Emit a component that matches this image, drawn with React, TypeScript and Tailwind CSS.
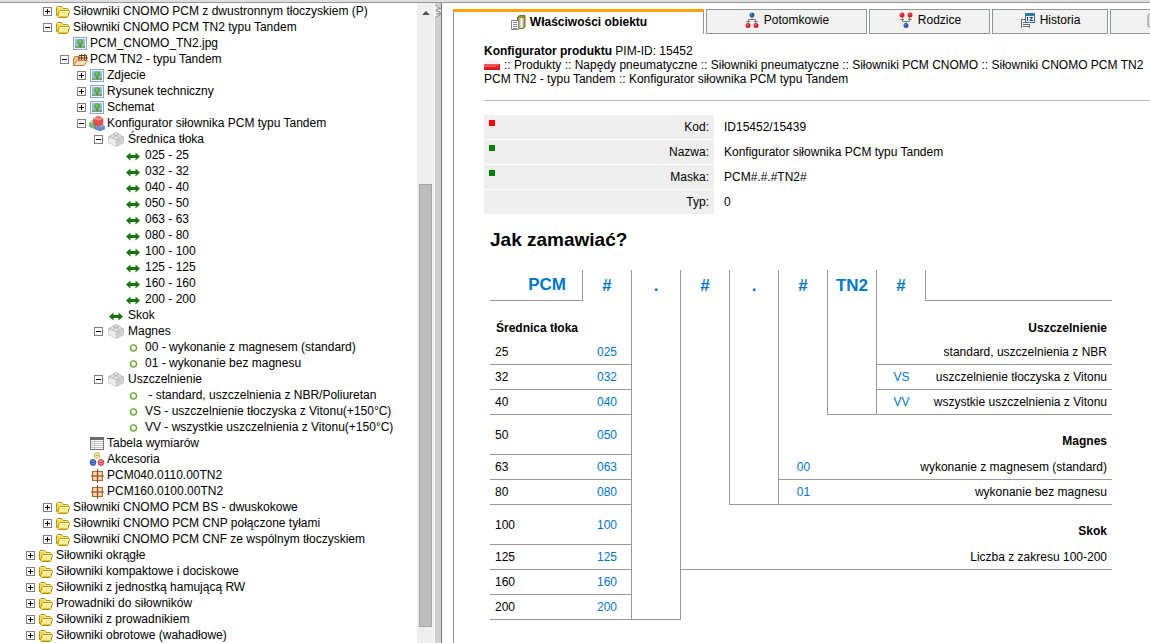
import { useState } from "react";
import type { ReactNode } from "react";

type IconName =
  | "folder"
  | "openFolder"
  | "image"
  | "cubes"
  | "brick"
  | "arrows"
  | "dot"
  | "table"
  | "circles"
  | "grid";

type Node = {
  label: string;
  icon: IconName;
  level: number;
  state?: "plus" | "minus";
};

const nodes: Node[] = [
  { level: 1, state: "plus", icon: "folder", label: "Siłowniki CNOMO PCM z dwustronnym tłoczyskiem (P)" },
  { level: 1, state: "minus", icon: "folder", label: "Siłowniki CNOMO PCM TN2 typu Tandem" },
  { level: 2, icon: "image", label: "PCM_CNOMO_TN2.jpg" },
  { level: 2, state: "minus", icon: "openFolder", label: "PCM TN2 - typu Tandem" },
  { level: 3, state: "plus", icon: "image", label: "Zdjecie" },
  { level: 3, state: "plus", icon: "image", label: "Rysunek techniczny" },
  { level: 3, state: "plus", icon: "image", label: "Schemat" },
  { level: 3, state: "minus", icon: "cubes", label: "Konfigurator siłownika PCM typu Tandem" },
  { level: 4, state: "minus", icon: "brick", label: "Średnica tłoka" },
  { level: 5, icon: "arrows", label: "025 - 25" },
  { level: 5, icon: "arrows", label: "032 - 32" },
  { level: 5, icon: "arrows", label: "040 - 40" },
  { level: 5, icon: "arrows", label: "050 - 50" },
  { level: 5, icon: "arrows", label: "063 - 63" },
  { level: 5, icon: "arrows", label: "080 - 80" },
  { level: 5, icon: "arrows", label: "100 - 100" },
  { level: 5, icon: "arrows", label: "125 - 125" },
  { level: 5, icon: "arrows", label: "160 - 160" },
  { level: 5, icon: "arrows", label: "200 - 200" },
  { level: 4, icon: "arrows", label: "Skok" },
  { level: 4, state: "minus", icon: "brick", label: "Magnes" },
  { level: 5, icon: "dot", label: "00 - wykonanie z magnesem (standard)" },
  { level: 5, icon: "dot", label: "01 - wykonanie bez magnesu" },
  { level: 4, state: "minus", icon: "brick", label: "Uszczelnienie" },
  { level: 5, icon: "dot", label: " - standard, uszczelnienia z NBR/Poliuretan" },
  { level: 5, icon: "dot", label: "VS - uszczelnienie tłoczyska z Vitonu(+150°C)" },
  { level: 5, icon: "dot", label: "VV - wszystkie uszczelnienia z Vitonu(+150°C)" },
  { level: 3, icon: "table", label: "Tabela wymiarów" },
  { level: 3, icon: "circles", label: "Akcesoria" },
  { level: 3, icon: "grid", label: "PCM040.0110.00TN2" },
  { level: 3, icon: "grid", label: "PCM160.0100.00TN2" },
  { level: 1, state: "plus", icon: "folder", label: "Siłowniki CNOMO PCM BS - dwuskokowe" },
  { level: 1, state: "plus", icon: "folder", label: "Siłowniki CNOMO PCM CNP połączone tyłami" },
  { level: 1, state: "plus", icon: "folder", label: "Siłowniki CNOMO PCM CNF ze wspólnym tłoczyskiem" },
  { level: 0, state: "plus", icon: "folder", label: "Siłowniki okrągłe" },
  { level: 0, state: "plus", icon: "folder", label: "Siłowniki kompaktowe i dociskowe" },
  { level: 0, state: "plus", icon: "folder", label: "Siłowniki z jednostką hamującą RW" },
  { level: 0, state: "plus", icon: "folder", label: "Prowadniki do siłowników" },
  { level: 0, state: "plus", icon: "folder", label: "Siłowniki z prowadnikiem" },
  { level: 0, state: "plus", icon: "folder", label: "Siłowniki obrotowe (wahadłowe)" },
];

const indents = ["pl-[23px]", "pl-[40px]", "pl-[57px]", "pl-[74px]", "pl-[91px]", "pl-[108px]"];

const drawings: Record<IconName, ReactNode> = {
  folder: (
    <>
      <path d="M1.500 12.500V4.500l1-1h4l1.500 2h4.500l1 1v6z" fill="#f3d94f" stroke="#b8940f" />
      <path d="M2.500 4.500h3.500l1.500 2h5" stroke="#fff6b8" fill="none" />
      <path d="M3.500 14.500l-1-1 1.500-5 1-1h9l.5.500-1.500 5.500-1 1z" fill="#fbec93" stroke="#b8940f" />
      <path d="M5 8.500h8.500" stroke="#fffde0" />
      <path d="M4 13.500h8.500" stroke="#e2c23c" />
    </>
  ),
  openFolder: (
    <>
      <path d="M1.500 13.500V8l1.500-2.500h3l1 1.500h6v6.500z" fill="#f3c68c" stroke="#c17a36" />
      <path d="M7 4.500h7.500v5H7z" fill="#f4d9b8" stroke="#6b3a1c" />
      <path d="M6 7h10M9.500 3v7M12.500 3v7" stroke="#6b3a1c" />
      <path d="M1.500 14.500l3.500-5h10.500l-3.500 5z" fill="#fce3c1" stroke="#c87a34" />
    </>
  ),
  image: (
    <>
      <rect x="1.500" y="2.500" width="13" height="12" fill="#f0f6fd" stroke="#8ba6cc" />
      <rect x="3" y="4" width="10" height="9" fill="#8ebcf0" />
      <rect x="3" y="11" width="10" height="2" fill="#7aa860" />
      <path d="M7.500 9h1.500v3H7.500z" fill="#6a6a2b" />
      <circle cx="8.300" cy="7.300" r="3" fill="#5fa83e" />
      <circle cx="8" cy="6.500" r="1.500" fill="#7cc355" />
    </>
  ),
  cubes: (
    <>
      <path d="M.5 7.500l2.500-2 5 1v5.500L4.500 13.500l-4-2z" fill="#7dba7a" stroke="#5d9e60" strokeWidth=".6" />
      <path d="M.5 7.500l2.500-2 5 1-3 2z" fill="#b2dcab" />
      <path d="M6 11l5-2 4.500 2v3L11 16l-5-2z" fill="#5d8fcb" stroke="#4877b0" strokeWidth=".6" />
      <path d="M6 11l5 1.500 4.500-1.500L11 9z" fill="#98bbe4" />
      <path d="M4.500 4L7 2h4.500L14 4v5.500l-4.500 2-5-2z" fill="#dd5050" stroke="#c9474b" strokeWidth=".6" />
      <path d="M4.500 4l5 1.500L14 4l-2.500-2H7z" fill="#f28d8d" />
      <ellipse cx="9.300" cy="2.300" rx="2.300" ry="1.300" fill="#f56969" />
    </>
  ),
  brick: (
    <>
      <path d="M.5 5.500L8 2.500l7.500 3.500v5.500L8.500 15.500.5 11.500z" fill="#e6e6e6" stroke="#a9a9a9" strokeWidth=".8" />
      <path d="M.5 5.500L8.500 9l7-3v5.500l-7 4z" fill="#d0d0d0" />
      <path d="M.5 5.500L8.500 9v6.500l-8-4z" fill="#ededed" />
      <path d="M.5 5.500L8.500 9l7-3M8.500 9v6" fill="none" stroke="#b8b8b8" strokeWidth=".7" />
      <ellipse cx="8" cy="3" rx="2.200" ry="1.300" fill="#f7f7f7" stroke="#999" strokeWidth=".8" />
      <ellipse cx="4.500" cy="5" rx="2" ry="1.200" fill="#fafafa" stroke="#aaa" strokeWidth=".7" />
      <ellipse cx="11.500" cy="5" rx="2" ry="1.200" fill="#fafafa" stroke="#aaa" strokeWidth=".7" />
      <ellipse cx="8.200" cy="6.800" rx="2" ry="1.200" fill="#fff" stroke="#aaa" strokeWidth=".7" />
    </>
  ),
  arrows: <path d="M1 9.500l4.500-4v2.500h5V5.500L15 9.500l-4.500 4V11h-5v2.500z" fill="#177510" />,
  dot: (
    <>
      <circle cx="8.500" cy="9" r="3.100" fill="#e4edc6" stroke="#76a83f" strokeWidth="1.300" />
      <circle cx="8" cy="8.300" r="1.300" fill="#fff" />
    </>
  ),
  table: (
    <>
      <rect x="1.500" y="2.500" width="13" height="12" fill="#fff" stroke="#777" />
      <path d="M1 3.500h14" stroke="#6d6d6d" strokeWidth="3" />
      <path d="M2 6.500h12M2 8.500h12M2 10.500h12M2 12.500h12" stroke="#c4c4c4" />
      <path d="M5.500 5v9" stroke="#c4c4c4" />
    </>
  ),
  circles: (
    <>
      <circle cx="8" cy="4.500" r="2.800" fill="#f7ee9a" stroke="#c9b457" />
      <path d="M6.500 4.500h3" stroke="#c4a842" />
      <circle cx="4" cy="11.500" r="2.900" fill="#5d87d0" stroke="#28509b" />
      <circle cx="12" cy="11.500" r="2.900" fill="#f18585" stroke="#c93c43" />
      <path d="M2.500 11.500h3" stroke="#25498d" />
      <path d="M10.500 11.500h3" stroke="#c03035" />
    </>
  ),
  grid: (
    <>
      <rect x="3.500" y="4.500" width="10" height="9" fill="#f3c396" stroke="#b06a38" />
      <path d="M8.500 2v14M2 9h13" stroke="#8a4a22" />
      <path d="M5 6.500h2M10 6.500h2M5 11.500h2M10 11.500h2" stroke="#fbdcbc" strokeWidth="2" />
    </>
  ),
};

function Icon({ name }: { name: IconName }) {
  return (
    <svg viewBox="0 0 16 16" className="size-4 shrink-0" aria-hidden="true">
      {drawings[name]}
    </svg>
  );
}

function TreeRow({ node }: { node: Node }) {
  const wide = node.level > 3;
  return (
    <li className={"flex h-4 items-center whitespace-pre " + indents[node.level]}>
      <span className="flex w-[15px] shrink-0 justify-center">
        {node.state && (
          <button type="button" aria-label={node.label} className="block size-[9px]">
            <svg viewBox="0 0 9 9" className="size-[9px]" aria-hidden="true">
              <rect x=".5" y=".5" width="8" height="8" fill="#fff" stroke="#808080" />
              <path d={node.state === "plus" ? "M2 4.500h5M4.500 2v5" : "M2 4.500h5"} stroke="#000" />
            </svg>
          </button>
        )}
      </span>
      <span className={"mr-0.5 flex shrink-0 justify-center " + (wide ? "w-5" : "w-4")}>
        <Icon name={node.icon} />
      </span>
      <a href="#">{node.label}</a>
    </li>
  );
}

function PropertiesIcon() {
  return (
    <svg viewBox="0 0 16 16" className="size-4 shrink-0" aria-hidden="true">
      <path d="M7.500 3l2-1.500h5.500v11.500l-1.500 1.500h-6z" fill="#9a9430" stroke="#75701c" />
      <path d="M9.500 4h4v10h-4z" fill="#d4d4cc" />
      <path d="M11.500 4v10" stroke="#f8f8f4" />
      <path d="M1.500 6.500h7v9h-7z" fill="#fff" stroke="#888" />
      <path d="M3 8.500h4M3 10.500h4M3 12.500h4M3 14.500h4" stroke="#888" />
    </svg>
  );
}

function FamilyIcon({ flipped }: { flipped?: boolean }) {
  const dots = flipped
    ? [
        [4, 3, "#d9242b"],
        [12, 3, "#d9242b"],
        [8, 13.5, "#2659a8"],
      ]
    : [
        [8, 3, "#2659a8"],
        [4, 13.5, "#d9242b"],
        [12, 13.5, "#d9242b"],
      ];
  return (
    <svg viewBox="0 0 16 16" className="size-4 shrink-0" aria-hidden="true">
      <path
        d={
          flipped
            ? "M4.500 5v4.500h7V5M8 9.500V12M2 7.500h4M10 7.500h4"
            : "M8 5v2.500M4.500 12V7.500h7V12M2 9.500h4M10 9.500h4"
        }
        fill="none"
        stroke="#777f88"
      />
      {dots.map(([x, y, c]) => (
        <g key={`${x}-${y}`}>
          <circle cx={x} cy={y} r="2.500" fill={String(c)} />
          <circle cx={Number(x) - 0.7} cy={Number(y) - 0.8} r=".7" fill="#fff" fillOpacity=".55" />
        </g>
      ))}
    </svg>
  );
}

function HistoryIcon() {
  return (
    <svg viewBox="0 0 16 16" className="size-4 shrink-0" aria-hidden="true">
      <path d="M1.500 8.500h8v7h-8z" fill="#fff" />
      <path d="M1.500 16V7.500H5M3 10.500h4M3 12.500h6M3 14.500h6M9.500 12v4" fill="none" stroke="#626a72" />
      <rect x="5.500" y="1.500" width="9" height="9" fill="#e4edf8" stroke="#416e96" />
      <path d="M5 2.500h10" stroke="#2a7e99" strokeWidth="3" />
      <path d="M7.500 5v4M9.500 5.500h3l-2.500 3h3" fill="none" stroke="#1f3d88" />
    </svg>
  );
}

const tabs = [
  { label: "Potomkowie", width: "w-[161px]", icon: <FamilyIcon /> },
  { label: "Rodzice", width: "w-[121px]", icon: <FamilyIcon flipped /> },
  { label: "Historia", width: "w-[116px]", icon: <HistoryIcon /> },
];

const fields = [
  { label: "Kod:", value: "ID15452/15439", mark: "bg-[#ff0000]" },
  { label: "Nazwa:", value: "Konfigurator siłownika PCM typu Tandem", mark: "bg-[#008000]" },
  { label: "Maska:", value: "PCM#.#.#TN2#", mark: "bg-[#008000]" },
  { label: "Typ:", value: "0", mark: "" },
];

type CellProps = { r?: boolean; b?: boolean; span?: number; className?: string; children?: ReactNode };

function Cell({ r, b, span, className = "", children }: CellProps) {
  return (
    <td
      colSpan={span}
      className={
        "whitespace-nowrap border-[#999999] p-0 " + (r ? "border-r " : "") + (b ? "border-b " : "") + className
      }
    >
      {children}
    </td>
  );
}

const code = "text-center text-[#0078c8]";
const text = "pr-[5px] text-right";
const heading = "pr-[5px] pt-3 text-right font-bold";

const orderRows: { size: string; code: string; tall?: boolean; rest: ReactNode }[] = [
  {
    size: "25",
    code: "025",
    rest: (
      <>
        <Cell r /><Cell r /><Cell r /><Cell r />
        <Cell b span={2} className={text}>standard, uszczelnienia z NBR</Cell>
      </>
    ),
  },
  {
    size: "32",
    code: "032",
    rest: (
      <>
        <Cell r /><Cell r /><Cell r /><Cell r />
        <Cell b className={code}>VS</Cell>
        <Cell b className={text}>uszczelnienie tłoczyska z Vitonu</Cell>
      </>
    ),
  },
  {
    size: "40",
    code: "040",
    rest: (
      <>
        <Cell r /><Cell r /><Cell r /><Cell r b />
        <Cell b className={code}>VV</Cell>
        <Cell b className={text}>wszystkie uszczelnienia z Vitonu</Cell>
      </>
    ),
  },
  {
    size: "50",
    code: "050",
    tall: true,
    rest: (
      <>
        <Cell r /><Cell r />
        <Cell span={4} className={heading}>Magnes</Cell>
      </>
    ),
  },
  {
    size: "63",
    code: "063",
    rest: (
      <>
        <Cell r /><Cell r />
        <Cell b className={code}>00</Cell>
        <Cell b span={3} className={text}>wykonanie z magnesem (standard)</Cell>
      </>
    ),
  },
  {
    size: "80",
    code: "080",
    rest: (
      <>
        <Cell r /><Cell r b />
        <Cell b className={code}>01</Cell>
        <Cell b span={3} className={text}>wykonanie bez magnesu</Cell>
      </>
    ),
  },
  { size: "100", code: "100", tall: true, rest: <Cell span={6} className={heading}>Skok</Cell> },
  { size: "125", code: "125", rest: <Cell b span={6} className={text}>Liczba z zakresu 100-200</Cell> },
  { size: "160", code: "160", rest: <Cell span={6} /> },
  { size: "200", code: "200", rest: <Cell span={6} /> },
];

function OrderTable() {
  return (
    <table className="w-full table-fixed border-separate border-spacing-0">
      <colgroup>
        <col className="w-[93px]" />
        {["a", "b", "c", "d", "e", "f", "g"].map((k) => (
          <col key={k} className="w-[49px]" />
        ))}
        <col />
      </colgroup>
      <thead>
        <tr className="h-[31px] text-[17px] font-bold text-[#0078c8]">
          <Cell r b className="pr-4 text-right">PCM</Cell>
          {["#", ".", "#", ".", "#", "TN2", "#"].map((t, i) => (
            <Cell key={i} r className="text-center">{t}</Cell>
          ))}
          <Cell b />
        </tr>
      </thead>
      <tbody>
        <tr className="h-[39px]">
          <Cell r span={2} className="pl-1.5 pt-3.5 font-bold">Średnica tłoka</Cell>
          <Cell r /><Cell r /><Cell r /><Cell r /><Cell r />
          <Cell span={2} className="pr-[5px] pt-3.5 text-right font-bold">Uszczelnienie</Cell>
        </tr>
        {orderRows.map((row) => (
          <tr key={row.size} className={row.tall ? "h-10" : "h-[25px]"}>
            <Cell b className="pl-[5px]">{row.size}</Cell>
            <Cell r b className={code}>{row.code}</Cell>
            <Cell r b={row.size === "200"} />
            {row.rest}
          </tr>
        ))}
      </tbody>
    </table>
  );
}

export default function App() {
  const [active, setActive] = useState("Właściwości obiektu");
  return (
    <div className="flex h-screen flex-col overflow-hidden bg-white font-['Liberation_Sans',Arial,sans-serif] text-xs leading-[14px] text-black">
      <div className="h-[3px] shrink-0 border-b border-[#999999] bg-[#dfdfdf]" />
      <div className="flex min-h-0 flex-1">
        <nav aria-label="Produkty" className="w-[417px] shrink-0 overflow-hidden">
          <ul>
            {nodes.map((n) => (
              <TreeRow key={n.label} node={n} />
            ))}
          </ul>
        </nav>
        <div className="flex w-[17px] shrink-0 flex-col items-center bg-[#efefef]" aria-hidden="true">
          <div className="flex w-full flex-[182] justify-center">
            <svg viewBox="0 0 8 4" className="mt-2 h-1 w-2">
              <path d="M0 4l4-4 4 4z" fill="#505050" />
            </svg>
          </div>
          <div className="w-[13px] flex-[442] border border-[#a3a3a3] bg-[#bdbdbd]" />
          <div className="flex-[16]" />
        </div>
        <div className="ml-px w-[7px] shrink-0 border-r border-[#777777] bg-[#d0d0d0]" aria-hidden="true">
          <svg viewBox="0 0 6 14" className="mt-px h-3.5 w-1.5">
            <path d="M0 0l6 5v5l-6 4z" fill="#eeeeee" />
            <path d="M0 1l6 4M5 5H2L1 7l4 1v2H1M0 14l6-4" stroke="#858585" fill="none" />
          </svg>
        </div>

        <main className="ml-[11px] mt-1.5 flex min-w-0 flex-1 flex-col overflow-hidden border-l border-[#8c9a9c]">
          <div className="flex h-[25px] shrink-0 gap-0.5" role="tablist">
            <button
              type="button"
              role="tab"
              aria-selected={active === "Właściwości obiektu"}
              onClick={() => setActive("Właściwości obiektu")}
              className="flex w-[250px] shrink-0 items-center justify-center gap-1 border-r border-t-[3px] border-r-[#8c9a9c] border-t-[#ffa500] pb-0.5 font-bold"
            >
              <PropertiesIcon />
              Właściwości obiektu
            </button>
            {tabs.map((t) => (
              <button
                key={t.label}
                type="button"
                role="tab"
                aria-selected={active === t.label}
                onClick={() => setActive(t.label)}
                className={
                  "flex shrink-0 items-center justify-center gap-1 border border-[#8c9a9c] bg-[#f2f2f0] pb-1 " + t.width
                }
              >
                {t.icon}
                {t.label}
              </button>
            ))}
            <button
              type="button"
              role="tab"
              aria-selected={false}
              aria-label="Więcej"
              className="flex w-[116px] shrink-0 items-center border border-[#8c9a9c] bg-[#f2f2f0] pb-1 pl-9"
            >
              <svg viewBox="0 0 16 16" className="size-4" aria-hidden="true">
                <rect x="1" y="2" width="14" height="13" rx="2" fill="#e3e3e3" stroke="#8b8b8b" />
              </svg>
            </button>
          </div>

          <div className="pl-[30px] pt-2.5">
            <header className="whitespace-nowrap border-b border-[#bbbbbb] pb-3.5">
              <p>
                <b>Konfigurator produktu</b> PIM-ID: 15452
              </p>
              <p className="flex items-center gap-1">
                <svg viewBox="0 0 16 11" className="h-[11px] w-4 shrink-0" role="img" aria-label="Polski">
                  <path d="M0 0h16v4H0z" fill="#f9f4f4" />
                  <path d="M0 4h16v6H0z" fill="#e81c22" />
                  <path d="M0 4h16L11 7H0z" fill="#f05a5c" />
                  <path d="M0 9h16v1H0z" fill="#c3161b" />
                </svg>
                <span>
                  :: Produkty :: Napędy pneumatyczne :: Siłowniki pneumatyczne :: Siłowniki PCM CNOMO :: Siłowniki CNOMO PCM TN2
                </span>
              </p>
              <p>PCM TN2 - typu Tandem :: Konfigurator siłownika PCM typu Tandem</p>
            </header>

            <table className="mt-[13px] border-separate border-spacing-y-px">
              <tbody>
                {fields.map((f) => (
                  <tr key={f.label} className="h-6">
                    <th scope="row" className="w-[230px] bg-[#efefef] p-0 px-[5px] font-normal">
                      <span className="flex h-6 items-center justify-between">
                        <span className={"mb-2 size-1.5 " + f.mark} />
                        {f.label}
                      </span>
                    </th>
                    <td className="p-0 pl-2.5">{f.value}</td>
                  </tr>
                ))}
              </tbody>
            </table>

            <section className="pl-1.5 pr-[38px] pt-[13px]">
              <h3 className="mb-[18px] text-[19px] font-bold leading-6">Jak zamawiać?</h3>
              <OrderTable />
            </section>
          </div>
        </main>
      </div>
    </div>
  );
}
